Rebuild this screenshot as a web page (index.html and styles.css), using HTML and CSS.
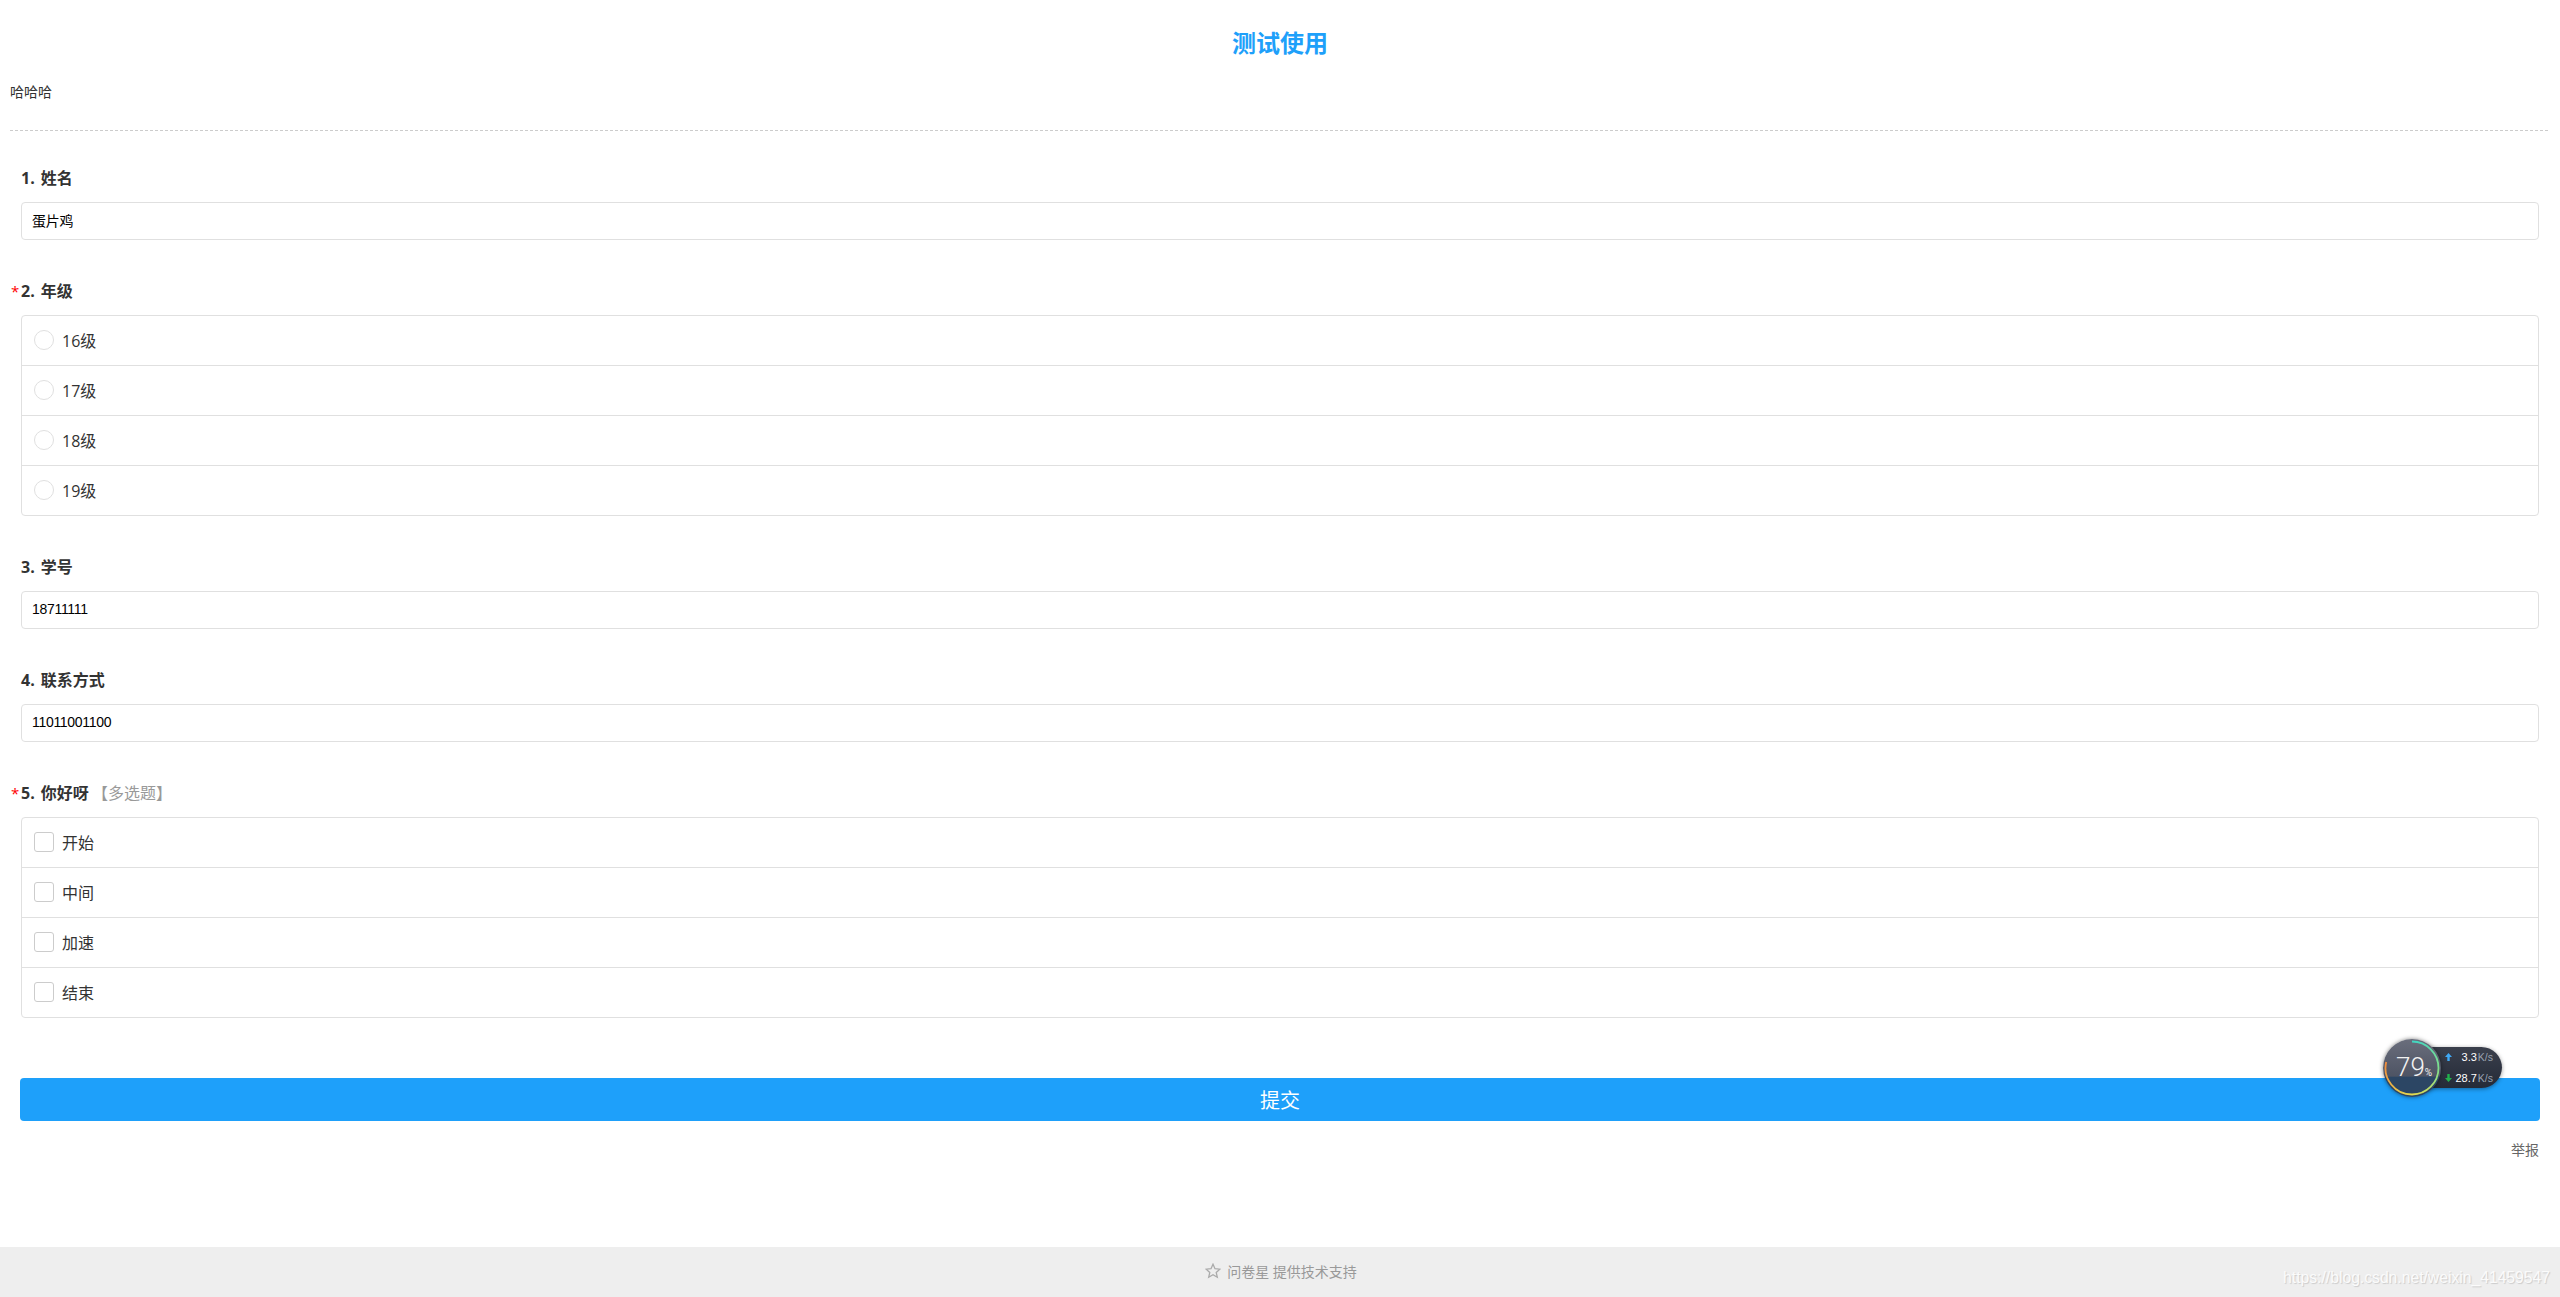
FILE: index.html
```html
<!DOCTYPE html>
<html lang="zh-CN">
<head>
  <meta charset="UTF-8">
  <title>测试使用</title>
  <link rel="stylesheet" href="styles.css">
</head>
<body>
  <div class="content">
    <h1 class="title">测试使用</h1>
    <div class="desc">哈哈哈</div>

    <form class="survey">
      <div class="question">
        <div class="q-title">1. 姓名</div>
        <input class="q-input" type="text" value="蛋片鸡">
      </div>

      <div class="question">
        <div class="q-title"><span class="star">*</span>2. 年级</div>
        <div class="options">
          <label class="option"><span class="radio"></span>16级</label>
          <label class="option"><span class="radio"></span>17级</label>
          <label class="option"><span class="radio"></span>18级</label>
          <label class="option"><span class="radio"></span>19级</label>
        </div>
      </div>

      <div class="question">
        <div class="q-title">3. 学号</div>
        <input class="q-input" type="text" value="18711111">
      </div>

      <div class="question">
        <div class="q-title">4. 联系方式</div>
        <input class="q-input" type="text" value="11011001100">
      </div>

      <div class="question">
        <div class="q-title"><span class="star">*</span>5. 你好呀<span class="q-type">【多选题】</span></div>
        <div class="options">
          <label class="option"><span class="check"></span>开始</label>
          <label class="option"><span class="check"></span>中间</label>
          <label class="option"><span class="check"></span>加速</label>
          <label class="option"><span class="check"></span>结束</label>
        </div>
      </div>

      <button class="submit" type="button">提交</button>
      <div class="report">举报</div>
    </form>
  </div>

  <div class="footer">
    <svg class="footer-star" width="16" height="16" viewBox="0 0 16 16">
      <path d="M8 1.2l2 4.5 4.9.5-3.7 3.2 1.1 4.8L8 11.7l-4.3 2.5 1.1-4.8L1.100 6.200l4.900-.5z" fill="none" stroke="#aaa" stroke-width="1.300"/>
    </svg>
    <span>问卷星 提供技术支持</span>
  </div>

  <div class="speed-widget">
    <div class="speed-pill">
      <div class="speed-row">
        <svg class="arrow" width="7" height="8" viewBox="0 0 7 8"><path d="M3.500 0L7 4H4.700V8H2.300V4H0z" fill="#3fa9f5"/></svg>
        <b>3.3</b><em>K/s</em>
      </div>
      <div class="speed-row">
        <svg class="arrow" width="7" height="8" viewBox="0 0 7 8"><path d="M3.500 8L7 4H4.700V0H2.300V4H0z" fill="#22b14c"/></svg>
        <b>28.7</b><em>K/s</em>
      </div>
    </div>
    <div class="speed-ball">
      <svg width="58" height="58" viewBox="0 0 58 58">
        <defs>
          <linearGradient id="ringA" gradientUnits="userSpaceOnUse" x1="29" y1="2" x2="56" y2="29">
            <stop offset="0" stop-color="#3fd6c4"/>
            <stop offset="1" stop-color="#7fe08c"/>
          </linearGradient>
          <linearGradient id="ringB" gradientUnits="userSpaceOnUse" x1="56" y1="29" x2="29" y2="56">
            <stop offset="0" stop-color="#7fe08c"/>
            <stop offset="1" stop-color="#e4d94f"/>
          </linearGradient>
          <linearGradient id="ringC" gradientUnits="userSpaceOnUse" x1="29" y1="56" x2="3" y2="23">
            <stop offset="0" stop-color="#e4d94f"/>
            <stop offset="1" stop-color="#f28c3c"/>
          </linearGradient>
        </defs>
        <path d="M29 2.500A26.500 26.500 0 0 1 55.500 29" fill="none" stroke="url(#ringA)" stroke-width="1.800"/>
        <path d="M55.500 29A26.500 26.500 0 0 1 29 55.500" fill="none" stroke="url(#ringB)" stroke-width="1.800"/>
        <path d="M29 55.500A26.500 26.500 0 0 1 3.200 23" fill="none" stroke="url(#ringC)" stroke-width="1.800"/>
      </svg>
      <span class="speed-num">79<small>%</small></span>
    </div>
  </div>

  <div class="watermark">https://blog.csdn.net/weixin_41459547</div>
</body>
</html>
```

FILE: styles.css
```css
* {
  box-sizing: border-box;
}

body {
  margin: 0;
  height: 100vh;
  display: flex;
  flex-direction: column;
  position: relative;
  overflow: hidden;
  background: #fff;
  color: #333;
  font-family: "Open Sans", "Noto Sans CJK SC", sans-serif;
  font-size: 14px;
}

.content {
  padding: 0 10px;
}

.title {
  margin: 0;
  padding-top: 26px;
  height: 72px;
  line-height: 34px;
  text-align: center;
  font-size: 24px;
  font-weight: bold;
  color: #1ea0fa;
}

.desc {
  height: 59px;
  padding-top: 8px;
  line-height: 24px;
  background: repeating-linear-gradient(90deg, #ccc 0 3px, transparent 3px 5px) left bottom / 100% 1px no-repeat;
}

.survey {
  padding: 37px 11px 0;
}

.question {
  margin-bottom: 41px;
}

.q-title {
  height: 22px;
  line-height: 20px;
  margin-bottom: 12px;
  font-size: 16px;
  font-weight: bold;
  word-spacing: 2px;
}

.star {
  display: inline-block;
  width: 11px;
  margin-left: -10px;
  margin-right: -1px;
  color: #f00;
  font-size: 15px;
  font-weight: normal;
}

.q-type {
  margin-left: 3px;
  font-size: 16px;
  font-weight: normal;
  color: #999;
}

.q-input {
  display: block;
  width: 100%;
  height: 38px;
  padding: 0 10px 2px;
  border: 1px solid #e0e0e0;
  border-radius: 4px;
  outline: none;
  color: #000;
  font-family: "Liberation Sans", "Noto Sans CJK SC", sans-serif;
  font-size: 14px;
  letter-spacing: -0.3px;
}

.options {
  border: 1px solid #e0e0e0;
  border-radius: 4px;
}

.option {
  display: flex;
  align-items: center;
  height: 50px;
  padding: 0 0 2px 12px;
  border-bottom: 1px solid #e0e0e0;
  font-size: 16px;
}

.option:last-child {
  height: 49px;
  border-bottom: none;
}

.radio,
.check {
  flex: none;
  width: 20px;
  height: 20px;
  margin-right: 8px;
  margin-top: 1px;
  border: 1px solid #e0e0e0;
  border-radius: 50%;
}

.check {
  border-color: #ccc;
  border-radius: 3px;
}

.submit {
  display: block;
  width: calc(100% + 2px);
  height: 43px;
  margin: 60px -1px 0;
  padding-bottom: 2px;
  border: none;
  border-radius: 4px;
  background: #1ea0fa;
  color: #fff;
  font-family: inherit;
  font-size: 20px;
}

.question:last-of-type {
  margin-bottom: 0;
}

.report {
  margin-top: 19px;
  line-height: 20px;
  text-align: right;
  color: #666;
}

.footer {
  margin-top: auto;
  flex: none;
  height: 50px;
  display: flex;
  align-items: center;
  justify-content: center;
  gap: 6px;
  padding: 0 0 2px 2px;
  background: #eee;
  color: #999;
}

/* csdn watermark sits on top of the footer */
.watermark {
  position: absolute;
  right: 10px;
  bottom: 10px;
  color: #fbfbfb;
  font-family: "Liberation Sans", sans-serif;
  font-size: 15.7px;
  text-shadow: 1px 1px 1px rgba(0, 0, 0, 0.15);
}

/* desktop network meter floating over the page */
.speed-widget {
  position: absolute;
  left: 2383px;
  top: 1039px;
  width: 120px;
  height: 58px;
}

.speed-pill {
  position: absolute;
  left: 28px;
  top: 8px;
  width: 91px;
  height: 41px;
  padding-left: 34px;
  display: flex;
  flex-direction: column;
  border-radius: 0 21px 21px 0;
  background: linear-gradient(#3a3f4c, #252b38);
  box-shadow: 0 1px 4px rgba(0, 0, 0, 0.4);
  font-family: "Liberation Sans", sans-serif;
}

.speed-row {
  flex: 1;
  display: flex;
  align-items: center;
  justify-content: flex-end;
  padding-right: 9px;
  color: #fff;
  font-size: 11px;
}

.speed-row b {
  font-weight: normal;
}

.speed-row em {
  margin-left: 1px;
  font-style: normal;
  font-size: 10.5px;
  color: #9aa3b0;
}

.arrow {
  margin-right: auto;
}

.speed-ball {
  position: absolute;
  left: 0;
  top: 0;
  width: 58px;
  height: 58px;
  border-radius: 50%;
  background: linear-gradient(#6a6e7c, #4e5464 64%, #2c4664 66%, #2c4664);
  box-shadow: 0 0 4px rgba(0, 0, 0, 0.5);
}

.speed-ball svg {
  position: absolute;
  left: 0;
  top: 0;
}

.speed-num {
  position: absolute;
  left: 13px;
  top: 14px;
  color: #f2f2f2;
  font-family: Roboto, "Liberation Sans", sans-serif;
  font-size: 26px;
  line-height: 28px;
  font-weight: 300;
}

.speed-num small {
  font-size: 10px;
  font-weight: 400;
}
```
